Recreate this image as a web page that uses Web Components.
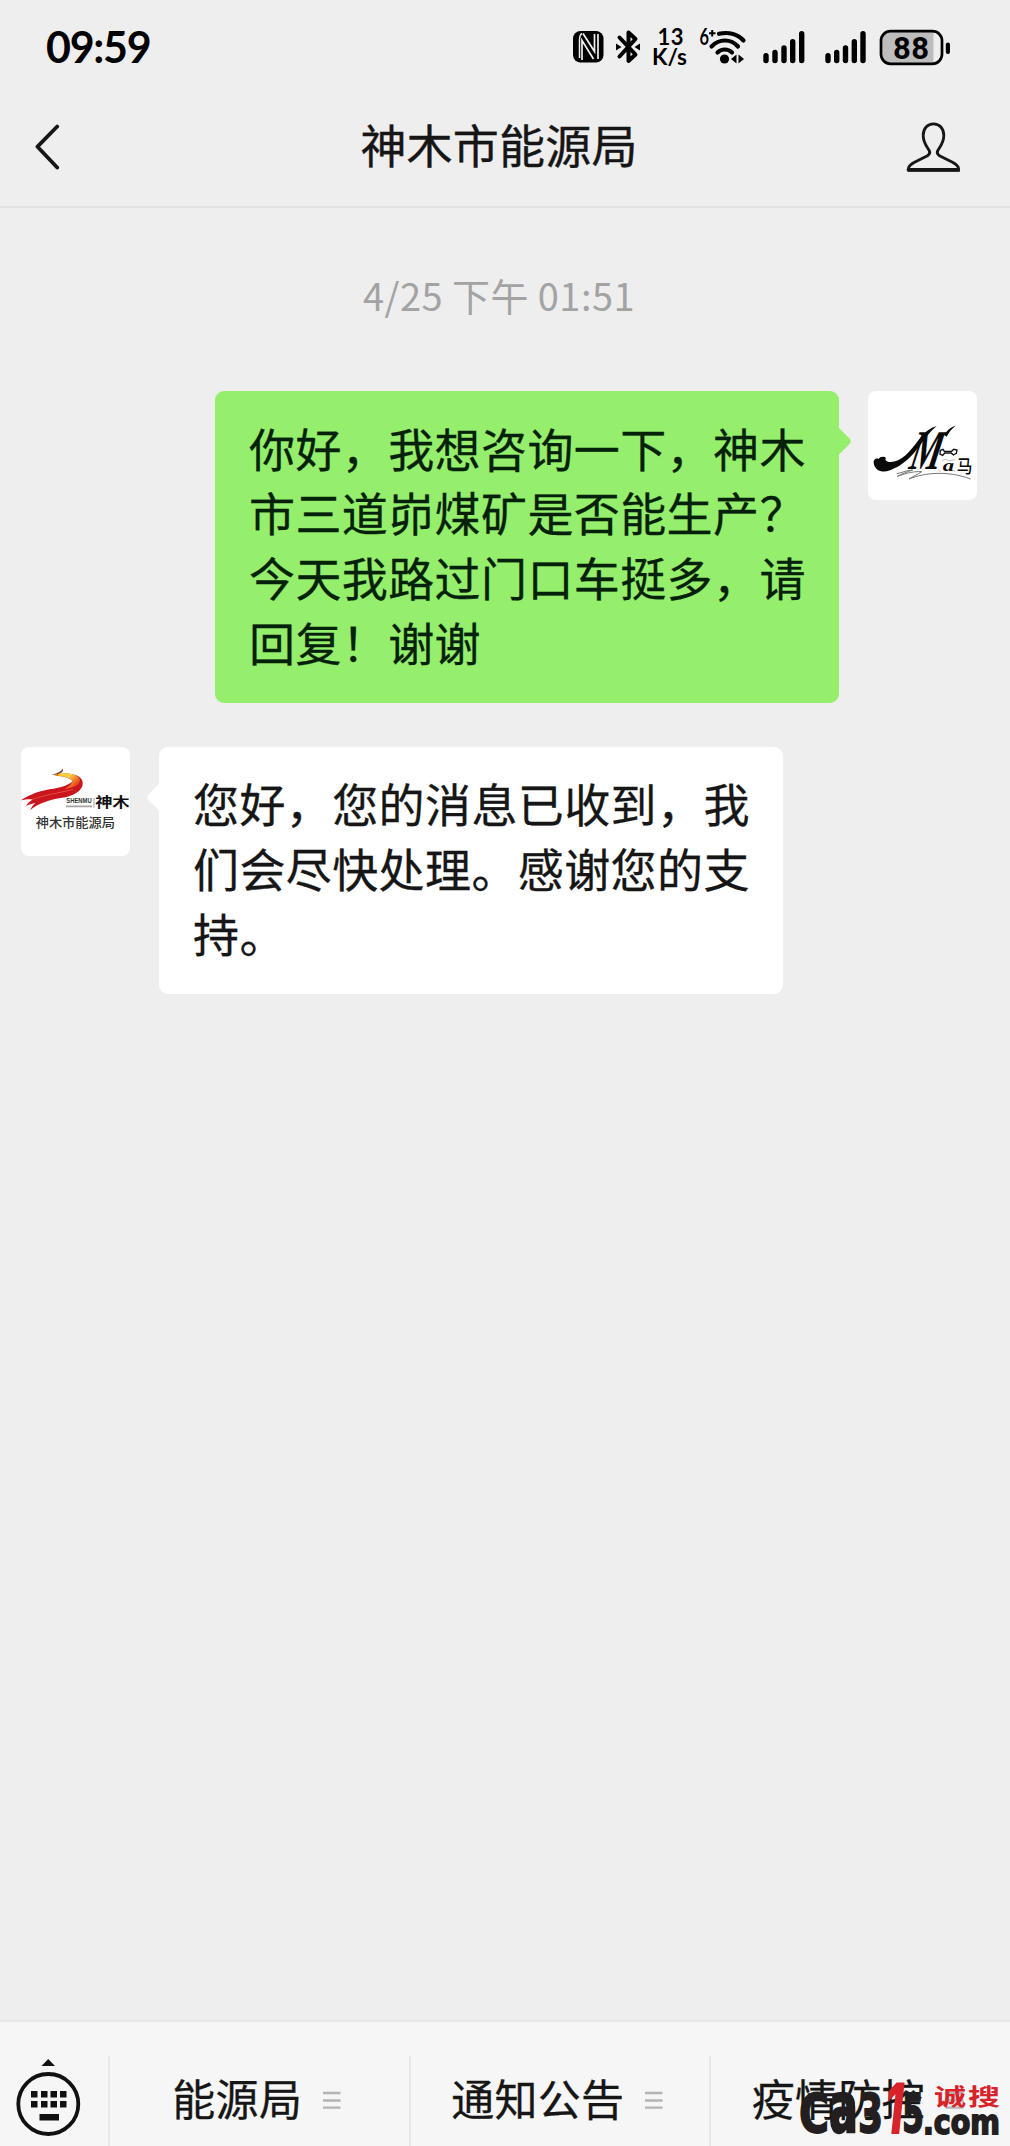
<!DOCTYPE html>
<html lang="zh-CN">
<head>
<meta charset="utf-8">
<title>神木市能源局</title>
<style>
html,body{margin:0;padding:0;background:#eee}
body{font-family:"Noto Sans CJK SC",sans-serif;color:#161616;width:1010px}
</style>
</head>
<body>
<chat-screen>
  <status-bar slot="top"></status-bar>
  <nav-header slot="top">神木市能源局</nav-header>
  <time-stamp>4/25 下午 01:51</time-stamp>
  <chat-message side="right"><avatar-ma slot="avatar"></avatar-ma>你好，我想咨询一下，神木<br>市三道峁煤矿是否能生产？<br>今天我路过门口车挺多，请<br>回复！谢谢</chat-message>
  <chat-message side="left"><avatar-bureau slot="avatar"></avatar-bureau>您好，您的消息已收到，我<br>们会尽快处理。感谢您的支<br>持。</chat-message>
  <menu-bar slot="bottom">
    <menu-item>能源局</menu-item>
    <menu-item>通知公告</menu-item>
    <menu-item>疫情防控</menu-item>
  </menu-bar>
  <site-mark slot="bottom"></site-mark>
</chat-screen>
<script>
const define = (name, html) => customElements.define(name, class extends HTMLElement {
  constructor() {
    super();
    this.attachShadow({ mode: 'open' }).innerHTML = html;
  }
});

define('chat-screen', `<style>
:host{display:flex;flex-direction:column;width:1010px;height:2146px;position:relative;overflow:hidden;background:#eee}
main{flex:1;display:flex;flex-direction:column}
</style><slot name="top"></slot><main><slot></slot></main><slot name="bottom"></slot>`);

define('status-bar', `<style>
:host{display:flex;justify-content:space-between;align-items:flex-start;height:90px;padding:0 50px 0 46px;box-sizing:border-box;color:#000}
span{font:700 43px/52px Lato,sans-serif;letter-spacing:-1.300px;margin-top:21px}
svg{display:block}
</style><span>09:59</span>
<svg width="390" height="90" viewBox="570 0 390 90" fill="#000">
<rect x="573" y="31" width="30.500" height="31.500" rx="7.500"/>
<path d="M582 60V40.500L593.500 59M583 33.500L594.500 51.500V34M598 34V59" fill="none" stroke="#eee" stroke-width="1.700"/>
<path d="M582 33.500Q579.500 35 579.500 40V58" fill="none" stroke="#eee" stroke-width="1.500"/>
<path d="M619.500 37.500L635.500 54.500L628.500 61V32.500L635.500 39L619.500 56.500" fill="none" stroke="#000" stroke-width="4" stroke-linejoin="round" stroke-linecap="round"/>
<path d="M616 43.500L621.500 47L616 50.500ZM640 43.500L634.500 47L640 50.500Z"/>
<g font-family="Lato" font-weight="700"><text x="657.500" y="45" font-size="22" textLength="26" lengthAdjust="spacing">13</text>
<text x="652" y="65" font-size="22" textLength="35" lengthAdjust="spacingAndGlyphs">K/s</text>
<text x="699.500" y="45" font-size="23" textLength="9.500" lengthAdjust="spacingAndGlyphs">6</text></g>
<path d="M709 33.200H715.500M712.200 30V36.500" stroke="#000" stroke-width="2"/>
<g fill="none" stroke="#000" stroke-width="4.200" stroke-linecap="round"><path d="M719 33.800C729 31.500 738 34.500 743.500 40.500M711.500 46.500C719 38.500 731 38.500 738 46.500M717.500 52.500C721.500 48.500 728 48.500 732 52.500"/></g>
<circle cx="724.500" cy="59" r="4.600"/>
<path d="M731 59L736.500 54.500V63.500ZM744 59L738.500 54.500V63.500Z"/>
<g stroke="#000" stroke-width="5.400" stroke-linecap="round"><path d="M766 55.700V60.500M775 52.500V60.500M784 48V60.500M792.700 41.700V60.500M801.700 33.700V60.500M828 55.700V60.500M836.700 52.500V60.500M845.500 48V60.500M854.300 41.700V60.500M863 33.700V60.500"/></g>
<rect x="881" y="31.200" width="61" height="32.600" rx="9.500" fill="#eee"/>
<path d="M933.500 31.200H890.500A9.500 9.500 0 0 0 881 40.700V54.300A9.500 9.500 0 0 0 890.500 63.800H933.500Z" fill="#bdbdbd"/>
<rect x="881" y="31.200" width="61" height="32.600" rx="9.500" fill="none" stroke="#000" stroke-width="2.700"/>
<rect x="945.800" y="42.500" width="4.200" height="11.500" rx="2"/>
<text x="893" y="58.500" font-family="Roboto" font-weight="700" font-size="31" textLength="36" lengthAdjust="spacing">88</text>
</svg>`);

define('nav-header', `<style>
:host{display:flex;justify-content:space-between;align-items:center;height:118px;padding:1px 50px 3px 35px;box-sizing:border-box;border-bottom:2px solid #e2e2e2}
h1{margin:-8px 0 0 4px;font-weight:400;font-size:46px;line-height:60px;letter-spacing:.2px;-webkit-text-stroke:.4px #161616}
svg{display:block}
</style>
<svg width="53" height="50" viewBox="35 122 53 50"><path d="M57.200 126.500L37.500 146.700L57.200 167.500" fill="none" stroke="#161616" stroke-width="3.800" stroke-linecap="round" stroke-linejoin="round"/></svg>
<h1><slot></slot></h1>
<svg width="54" height="54" viewBox="906 120 54 54"><path d="M933.500 123.800C939.500 123.800 943.800 128.500 943.800 135.500C943.800 143 939.500 147.500 937.800 150.500C936.500 153 937.500 154.500 939.500 155.800L952.500 162.300C957 164.800 958.500 166 958.500 168.500V170.200H908.500V168.500C908.500 166 910 164.800 914.500 162.300L927.500 155.800C929.500 154.500 930.500 153 929.200 150.500C927.500 147.500 923.200 143 923.200 135.500C923.200 128.500 927.500 123.800 933.500 123.800Z" fill="none" stroke="#161616" stroke-width="2.800" stroke-linejoin="round"/><path d="M908.500 169.800H958.500" stroke="#161616" stroke-width="3.800" stroke-linecap="round"/></svg>`);

define('time-stamp', `<style>
:host{display:flex;justify-content:center;margin-top:58px;height:58px;padding-right:12px;font-size:38px;line-height:58px;color:#a3a3a3;letter-spacing:.45px;white-space:pre}
</style><slot></slot>`);

define('chat-message', `<style>
:host{display:flex;gap:29px;align-items:flex-start;font-size:46px;line-height:64.800px;letter-spacing:.4px;white-space:nowrap;--c:#95ee6c;-webkit-text-stroke:.3px currentColor}
:host([side=right]){flex-direction:row-reverse;padding-right:33px;margin-top:67px;color:#04210a}
:host([side=left]){padding-left:21px;margin-top:44px;--c:#fff}
.b{position:relative;box-sizing:border-box;width:624px;padding:23.500px 0 29.300px 34px;background:var(--c);border-radius:9px}
.b svg{position:absolute;top:35px;right:-13px;fill:var(--c)}
:host([side=left]) .b svg{right:auto;left:-13px;transform:scaleX(-1)}
</style><slot name="avatar"></slot><div class="b"><svg width="14" height="32" viewBox="0 0 14 32"><path d="M0 1L11.500 12.500Q14 15.500 11.500 18L0 29.500Z"/></svg><slot></slot></div>`);

const avatarStyle = `<style>:host{display:block;width:109px;height:109px;border-radius:8px;background:#fff;overflow:hidden;flex:none;line-height:0;letter-spacing:0;color:#111;-webkit-text-stroke:0}svg{display:block}</style>`;

define('avatar-ma', avatarStyle + `<svg width="109" height="109" viewBox="56 33 327 327" fill="#0a0a0a">
<path d="M73 249C72 239 80 233 88 237C91 230 105 228 110 234C105 240 112 246 124 246C155 246 180 218 207 181C225 157 240 145 262 138C240 156 222 183 203 208C181 237 153 258 135 265C112 280 77 279 73 249Z"/>
<path d="M284 165C293 150 305 141 319 137C307 146 298 157 292 170Z"/>
<text transform="translate(176 268) skewX(-12)" x="0" y="0" font-family="Liberation Serif" font-style="italic" font-weight="700" font-size="168" textLength="94" lengthAdjust="spacingAndGlyphs">M</text>
<path d="M273 211L281 208L285 214H307L313 208L323 210L321 220L312 225L306 219H286L280 226L272 222Z" fill="#fff" stroke="#111" stroke-width="4"/>
<text x="280" y="274" font-family="Liberation Serif" font-style="italic" font-weight="700" font-size="52" textLength="34" lengthAdjust="spacingAndGlyphs">a</text>
<text x="322" y="280" font-family="Noto Sans CJK SC" font-weight="500" font-size="54" textLength="47" lengthAdjust="spacingAndGlyphs">马</text>
<path d="M277 242L288 238L298 242L318 239M268 271L274 274M308 270L316 274" stroke="#999" stroke-width="2" fill="none"/>
<path d="M142 281C158 278 175 270 190 270C172 276 156 282 144 289C175 278 194 274 217 275C205 283 190 290 179 297C225 278 295 271 364 297" fill="none" stroke="#777" stroke-width="3"/>
</svg>`);

define('avatar-bureau', avatarStyle + `<svg width="109" height="109" viewBox="34 37 327 327">
<defs><linearGradient id="y" x1="0" y1="0" x2="1" y2=".6"><stop offset="0" stop-color="#f7c400"/><stop offset=".5" stop-color="#fbd24a"/><stop offset="1" stop-color="#e33b18"/></linearGradient></defs>
<path d="M34 197C61 177 98 166 132 162C161 157 176 151 189 139C180 130 166 124 135 123C158 113 206 113 218 138C225 163 197 184 157 189C121 194 83 207 62 226C66 217 70 210 78 205C68 207 56 210 49 214C54 206 61 200 70 194C56 193 45 195 34 197Z" fill="#c9151e"/>
<path d="M133 122C157 112 197 114 210 132C216 147 195 160 165 162C178 157 185 149 188 139C179 129 159 124 133 122Z" fill="url(#y)"/>
<path d="M125 120C141 116 153 111 160 102C162 115 146 121 125 120Z" fill="#7d432e"/>
<path d="M66 195C105 180 142 177 190 164" stroke="#e94a3b" stroke-width="3" fill="none"/>
<text x="170" y="204" font-family="Liberation Sans" font-weight="700" font-size="19" textLength="76" lengthAdjust="spacingAndGlyphs" fill="#333">SHENMU</text>
<path d="M170 215H246" stroke="#777" stroke-width="5" stroke-dasharray="4 2"/><path d="M253 190V219" stroke="#777" stroke-width="2"/>
<text transform="translate(257 217) scale(1 .760)" x="0" y="0" font-family="Noto Sans CJK SC" font-weight="700" font-size="52" textLength="103" fill="#111">神木</text>
<text x="78" y="278" font-family="Noto Sans CJK SC" font-weight="500" font-size="38" textLength="238" lengthAdjust="spacingAndGlyphs" fill="#333">神木市能源局</text>
</svg>`);

define('menu-bar', `<style>
:host{display:flex;height:126px;box-sizing:border-box;border-top:2px solid #e7e7e7;background:#f6f6f6;align-items:flex-end}
.k{width:108px;height:90px;flex:none}
svg{display:block}
</style><div class="k"><svg width="108" height="90" viewBox="0 2056 108 90" fill="#111"><path d="M41.500 2066L48.200 2059L55 2066Z"/><circle cx="48.300" cy="2104" r="30" fill="none" stroke="#111" stroke-width="3.800"/><path d="M31 2091h6.500v6.500h-6.500zM41 2091h6.500v6.500h-6.500zM50.500 2091h6.500v6.500h-6.500zM60 2091h6.500v6.500h-6.500zM31 2101h6.500v6.500h-6.500zM41 2101h6.500v6.500h-6.500zM50.500 2101h6.500v6.500h-6.500zM60 2101h6.500v6.500h-6.500zM39.500 2114h19.500v6.500h-19.500z"/></svg></div><slot></slot>`);

define('menu-item', `<style>
:host{display:flex;flex:0 0 300.500px;box-sizing:border-box;height:90px;border-left:2px solid #e8e8e8;justify-content:center;align-items:center;gap:21px;font-size:43px;line-height:64px;letter-spacing:.3px;padding:0 5px 8px 0;white-space:nowrap;-webkit-text-stroke:.3px #161616}
svg{display:block;margin-top:7px}
</style><slot></slot><svg width="18" height="19" viewBox="0 0 18 19" stroke="#b4b4b4" stroke-width="2.300"><path d="M0 2H17.500M0 9.500H17.500M0 16.700H17.500"/></svg>`);

define('site-mark', `<style>
:host{position:absolute;right:0;bottom:0;width:220px;height:76px}
svg{display:block;overflow:visible}
</style><svg width="220" height="76" viewBox="790 2070 220 76" fill="#231f20">
<g font-family="DejaVu Sans" font-weight="700" stroke="#231f20" stroke-width="1.800">
<text x="799" y="2132" font-size="54" textLength="30" lengthAdjust="spacingAndGlyphs">C</text>
<text transform="translate(829 2132) scale(1 1.270)" x="0" y="0" font-size="54" textLength="29" lengthAdjust="spacingAndGlyphs">a</text>
<text x="858" y="2132" font-size="54" textLength="25" lengthAdjust="spacingAndGlyphs">3</text>
<text x="902" y="2132" font-size="54" textLength="22" lengthAdjust="spacingAndGlyphs">5</text>
<text x="923" y="2133.500" font-size="34" textLength="77" lengthAdjust="spacingAndGlyphs">.com</text>
</g>
<text transform="translate(883 2133.500) skewX(-6)" x="0" y="0" font-family="Inter" font-weight="900" font-size="71" textLength="18" lengthAdjust="spacingAndGlyphs" fill="#d8232a">1</text>
<text transform="translate(934 2105) scale(1 .720)" x="0" y="0" font-family="Noto Sans CJK SC" font-weight="700" font-size="32" textLength="66" fill="#d8232a">诚搜</text>
</svg>`);
</script>
</body>
</html>
